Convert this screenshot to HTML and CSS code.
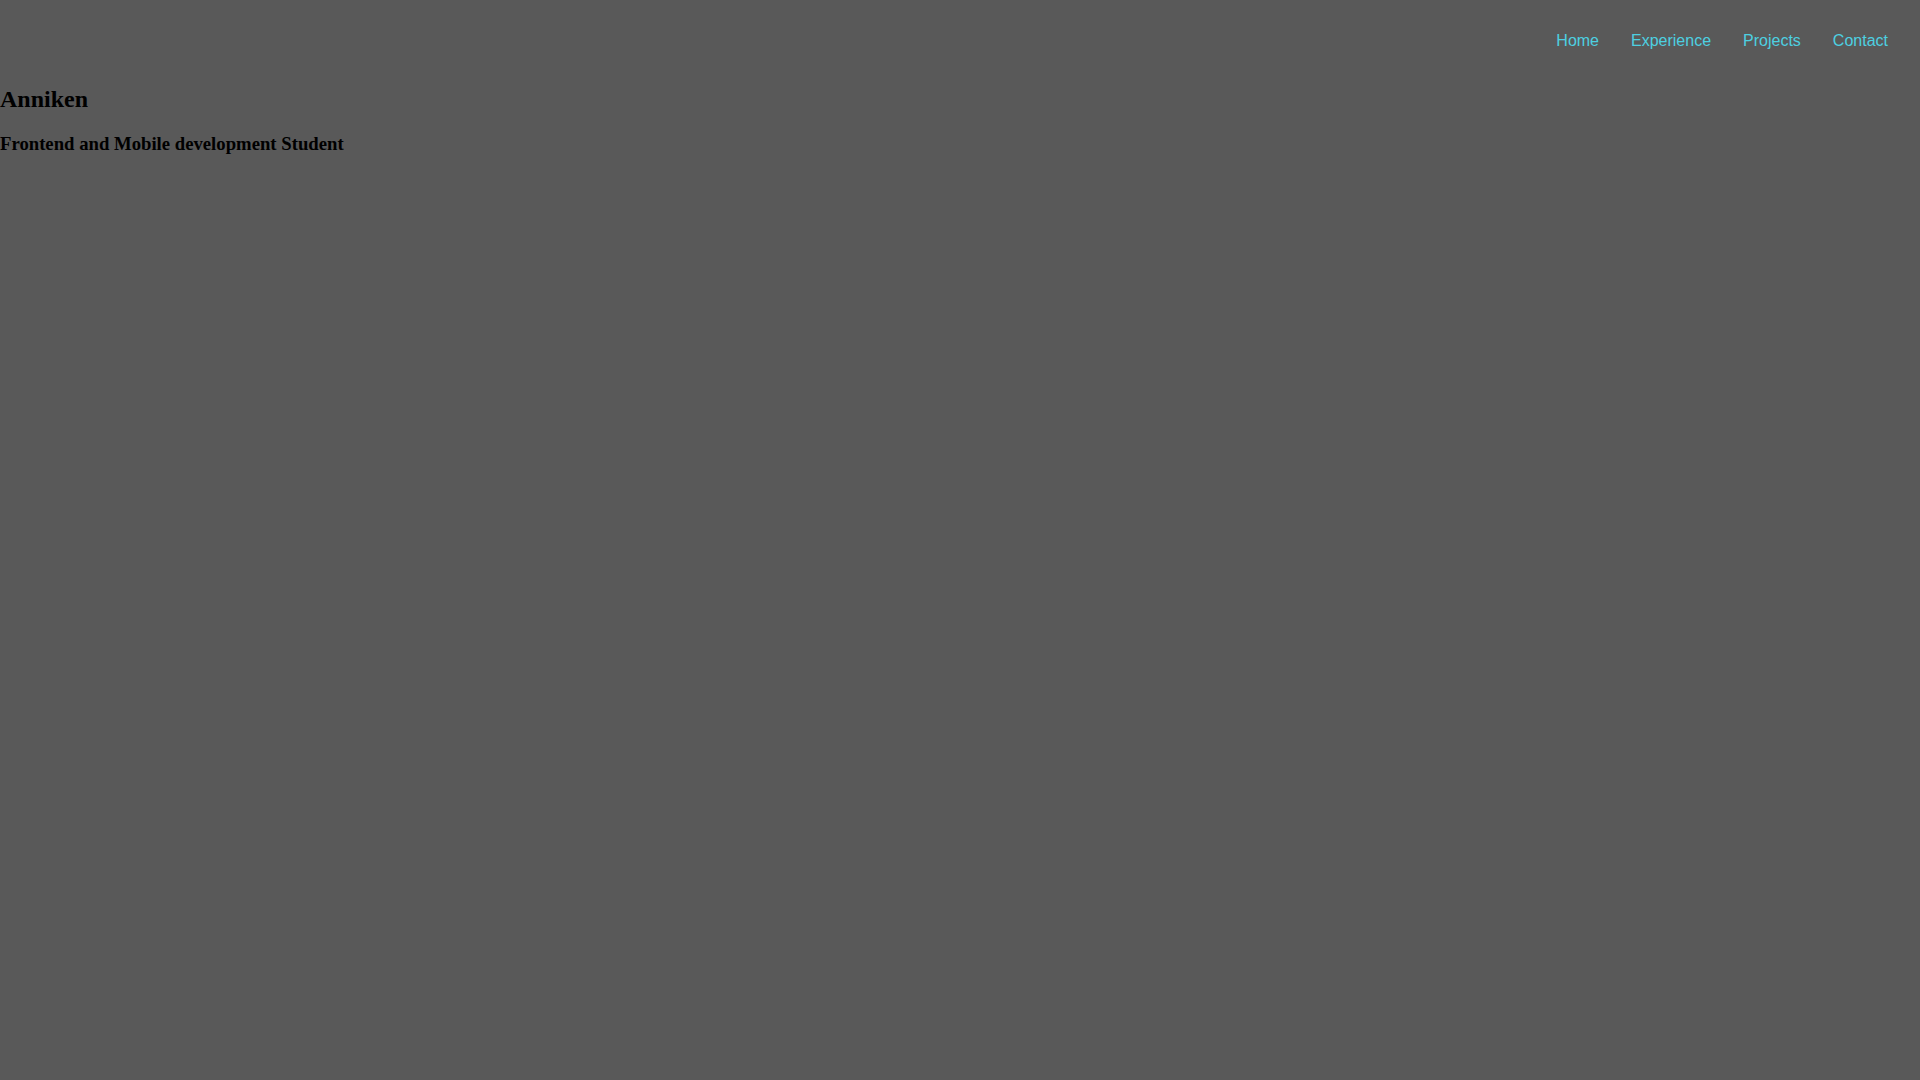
FILE: index.html
```html
<!DOCTYPE html>
<html lang="en">
<head>
<meta charset="utf-8">
<title>Anniken</title>
<link rel="stylesheet" href="styles.css">
</head>
<body>
<header class="site-header">
  <nav class="main-nav">
    <a class="nav-link" href="#">Home</a>
    <a class="nav-link" href="#">Experience</a>
    <a class="nav-link" href="#">Projects</a>
    <a class="nav-link" href="#">Contact</a>
  </nav>
</header>
<main class="intro">
  <h2 class="name">Anniken</h2>
  <h3 class="tagline">Frontend and Mobile development Student</h3>
</main>
</body>
</html>
```

FILE: styles.css
```css
html, body {
  margin: 0;
  padding: 0;
  min-height: 100%;
  background: #595959;
}
body {
  font-family: "Liberation Serif", "Times New Roman", serif;
  color: #000;
  min-height: 100vh;
}
.site-header {
  display: flex;
  justify-content: flex-end;
  padding: 32px 32px 16px 0;
}
.main-nav {
  display: flex;
  gap: 32px;
}
.nav-link {
  font-family: "Liberation Sans", Arial, sans-serif;
  font-size: 16px;
  color: #4dd0e1;
  text-decoration: none;
}
.intro {
  padding: 0;
}
.name {
  font-size: 24px;
  font-weight: bold;
  margin: 20px 0 20px;
}
.tagline {
  font-size: 18.72px;
  font-weight: bold;
  margin: 0;
}
```
